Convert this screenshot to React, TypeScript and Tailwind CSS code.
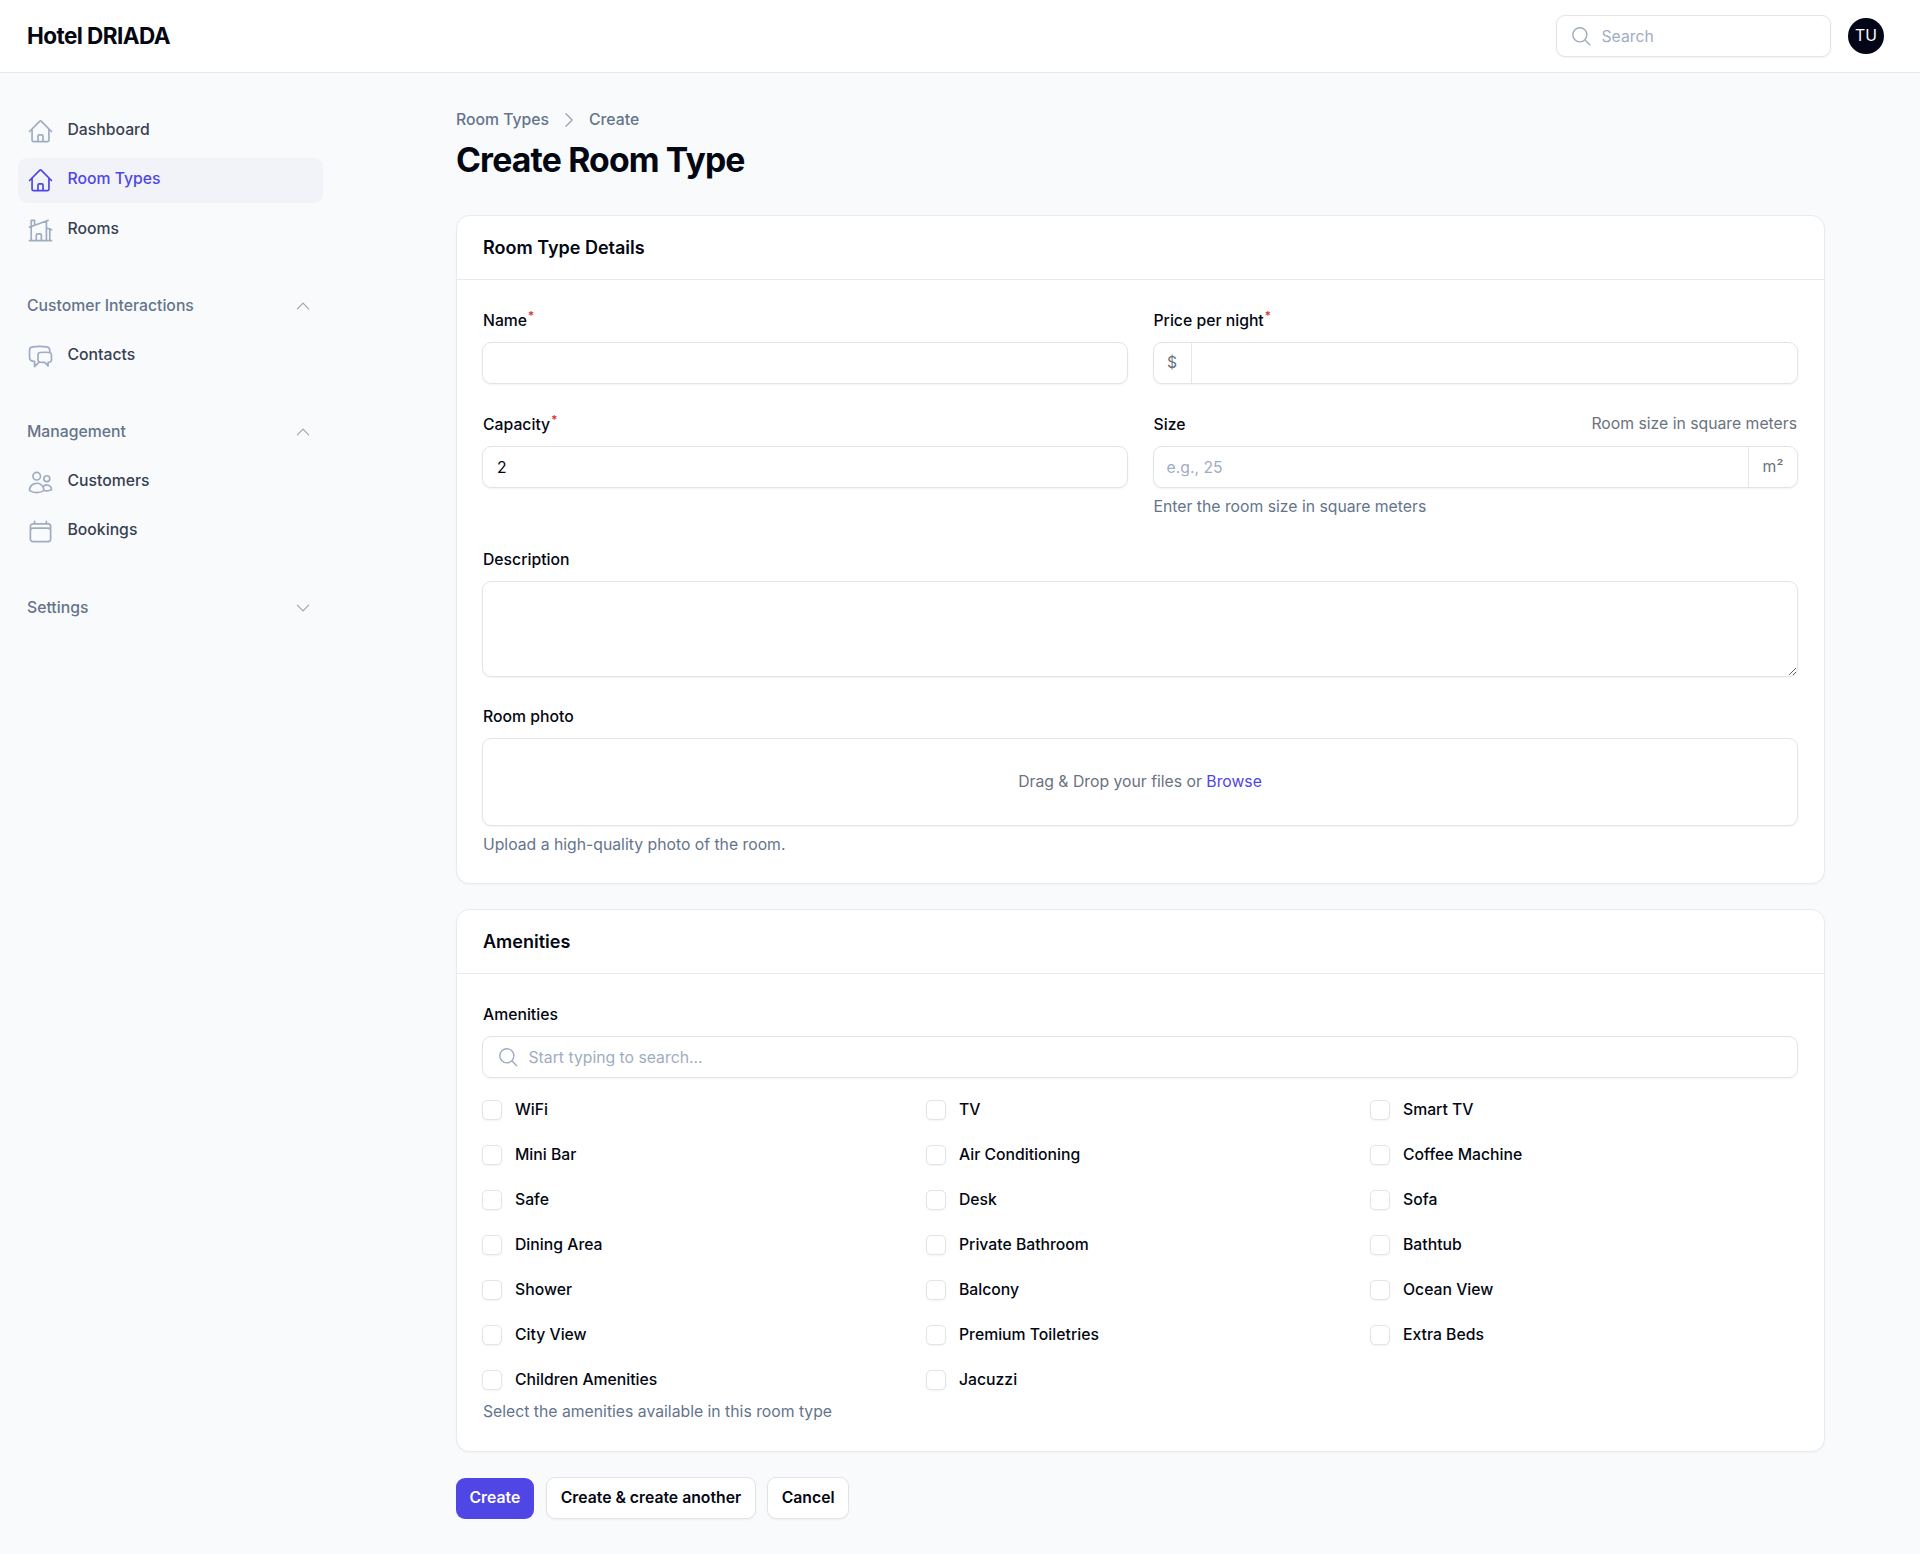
import React from 'react'
import {
  HiOutlineHome,
  HiOutlineHomeModern,
  HiOutlineChatBubbleLeftRight,
  HiOutlineUsers,
  HiOutlineCalendar,
  HiOutlineMagnifyingGlass,
  HiOutlineChevronUp,
  HiOutlineChevronDown,
  HiOutlineChevronRight
} from 'react-icons/hi2'

const amenities = [
  'WiFi', 'TV', 'Smart TV',
  'Mini Bar', 'Air Conditioning', 'Coffee Machine',
  'Safe', 'Desk', 'Sofa',
  'Dining Area', 'Private Bathroom', 'Bathtub',
  'Shower', 'Balcony', 'Ocean View',
  'City View', 'Premium Toiletries', 'Extra Beds',
  'Children Amenities', 'Jacuzzi'
]

const NavItem = ({
  icon: Icon,
  label,
  active = false
}: {
  icon: React.ComponentType<{ className?: string }>
  label: string
  active?: boolean
}): React.ReactElement => (
  <a
    className={
      active
        ? 'flex items-start gap-[13.5px] p-[9px] rounded-[9px] bg-[#f1f3f9] text-[#4f46e5]'
        : 'flex items-start gap-[13.5px] p-[9px] rounded-[9px] text-[#374151]'
    }
  >
    <Icon className={active ? 'w-[27px] h-[27px] text-[#4f46e5]' : 'w-[27px] h-[27px] text-[#9fadc2]'} />
    <span className="mt-[1px] text-[15.75px] font-medium leading-[22.5px]">{label}</span>
  </a>
)

const GroupLabel = ({ label, open = true }: { label: string; open?: boolean }): React.ReactElement => (
  <div className="flex items-center justify-between h-[22.5px] pl-[9px] pr-[11px] text-[#64748b]">
    <span className="text-[15.75px] font-medium leading-[22.5px]">{label}</span>
    {open ? (
      <HiOutlineChevronUp className="w-[18px] h-[18px] text-[#9ca3af]" />
    ) : (
      <HiOutlineChevronDown className="w-[18px] h-[18px] text-[#9ca3af]" />
    )}
  </div>
)

const Label = ({ children, required = false }: { children: React.ReactNode; required?: boolean }): React.ReactElement => (
  <label className="block h-[25px] text-[15.75px] leading-[27px] font-medium text-[#030712]">
    {children}
    {required && <sup className="text-[#dc2626] font-medium ml-[1px]">*</sup>}
  </label>
)

const boxClass = 'flex items-center h-[42px] mt-[10px] -mx-[1px] rounded-[9px] bg-white border border-[#e2e4e9] shadow-[0_1px_2px_rgba(0,0,0,0.05)] overflow-hidden'
const inputClass = 'flex-1 min-w-0 h-full px-[13px] bg-transparent outline-none text-[15.75px] text-[#030712] placeholder:text-[#9fadc2]'
const hintClass = 'text-[15.75px] leading-[22.5px] text-[#64748b]'
const outlineButton = 'h-[42px] rounded-[9px] bg-white border border-[#e2e4e9] shadow-[0_1px_2px_rgba(0,0,0,0.05)] text-[#030712] text-[15.75px] font-semibold'

const Card = ({ title, children }: { title: string; children: React.ReactNode }): React.ReactElement => (
  <section className="bg-white rounded-[13.5px] border border-[#e8eaee] shadow-[0_1px_2px_rgba(0,0,0,0.04)]">
    <h2 className="h-[64px] flex items-center px-[26px] border-b border-[#e8eaee] text-[18px] font-semibold text-[#030712]">
      {title}
    </h2>
    {children}
  </section>
)

const App: React.FC = (): React.ReactElement => {
  return (
    <div className="min-h-[1554px] bg-[#f9fafb] font-['Inter',sans-serif]">
      <header className="h-[73px] bg-white border-b border-[#e5e7eb] flex items-center justify-between pl-[27px] pr-[36px]">
        <span className="text-[22.5px] font-bold tracking-tight text-[#030712]">Hotel DRIADA</span>
        <div className="flex items-center gap-[17px]">
          <div className="w-[275px] h-[42px] flex items-center gap-[9px] px-[13px] rounded-[9px] bg-white border border-[#e2e4e9] shadow-[0_1px_2px_rgba(0,0,0,0.05)]">
            <HiOutlineMagnifyingGlass className="w-[22.5px] h-[22.5px] text-[#9fadc2]" />
            <input className="flex-1 min-w-0 mt-[2px] bg-transparent outline-none text-[15.75px] placeholder:text-[#9fadc2]" placeholder="Search" />
          </div>
          <div className="w-[36px] h-[36px] rounded-full bg-[#020617] text-white text-[15.75px] flex items-center justify-center">
            TU
          </div>
        </div>
      </header>

      <div className="flex">
        <aside className="w-[320px] shrink-0 pt-[35.5px] pl-[18px]">
          <nav className="w-[305px]">
            <div className="flex flex-col gap-[4.5px]">
              <NavItem icon={HiOutlineHome} label="Dashboard" />
              <NavItem icon={HiOutlineHome} label="Room Types" active />
              <NavItem icon={HiOutlineHomeModern} label="Rooms" />
            </div>
            <div className="mt-[42.5px]">
              <GroupLabel label="Customer Interactions" />
              <div className="mt-[16px]">
                <NavItem icon={HiOutlineChatBubbleLeftRight} label="Contacts" />
              </div>
            </div>
            <div className="mt-[42px]">
              <GroupLabel label="Management" />
              <div className="mt-[16.5px] flex flex-col gap-[4.5px]">
                <NavItem icon={HiOutlineUsers} label="Customers" />
                <NavItem icon={HiOutlineCalendar} label="Bookings" />
              </div>
            </div>
            <div className="mt-[43px]">
              <GroupLabel label="Settings" open={false} />
            </div>
          </nav>
        </aside>

        <main className="flex-1 pl-[136px] pr-[95px] pt-[35.5px]">
          <div className="flex items-center gap-[10px] h-[22.5px] text-[15.75px] font-medium text-[#64748b]">
            <span>Room Types</span>
            <HiOutlineChevronRight className="w-[20px] h-[20px] text-[#9ca3af]" />
            <span>Create</span>
          </div>
          <h1 className="mt-[9px] h-[40.5px] text-[33.75px] leading-[40.5px] font-bold tracking-tight text-[#030712]">
            Create Room Type
          </h1>

          <div className="mt-[34.5px] flex flex-col gap-[25px]">
            <Card title="Room Type Details">
              <div className="pl-[26px] pr-[27px] pt-[27px] pb-[27px]">
                <div className="grid grid-cols-2 gap-x-[27px] gap-y-[27px]">
                  <div>
                    <Label required>Name</Label>
                    <div className={boxClass}>
                      <input className={inputClass} />
                    </div>
                  </div>
                  <div>
                    <Label required>Price per night</Label>
                    <div className={boxClass}>
                      <span className="w-[38px] h-full flex items-center justify-center border-r border-[#e5e7eb] text-[15.75px] text-[#6b7280]">
                        $
                      </span>
                      <input className={inputClass} />
                    </div>
                  </div>
                  <div>
                    <Label required>Capacity</Label>
                    <div className={boxClass}>
                      <input className={inputClass + ' pl-[14px]'} defaultValue="2" />
                    </div>
                  </div>
                  <div>
                    <div className="flex justify-between h-[25px]">
                      <Label>Size</Label>
                      <span className="text-[15.75px] leading-[26px] text-[#6b7280]">Room size in square meters</span>
                    </div>
                    <div className={boxClass}>
                      <input className={inputClass} placeholder="e.g., 25" />
                      <span className="w-[49px] h-full flex items-center justify-center border-l border-[#e5e7eb] text-[15.75px] text-[#6b7280]">
                        m²
                      </span>
                    </div>
                    <p className={hintClass + ' mt-[8px]'}>Enter the room size in square meters</p>
                  </div>
                </div>

                <div className="mt-[27.5px]">
                  <Label>Description</Label>
                  <textarea className="block w-[calc(100%+2px)] h-[96px] mt-[9.5px] -mx-[1px] rounded-[9px] bg-white border border-[#e2e4e9] shadow-[0_1px_2px_rgba(0,0,0,0.05)] outline-none resize-y px-[13px] py-[9px] text-[15.75px]" />
                </div>

                <div className="mt-[26.5px]">
                  <Label>Room photo</Label>
                  <div className="h-[88px] mt-[9.5px] -mx-[1px] flex items-center justify-center rounded-[9px] bg-white border border-[#e2e4e9] shadow-[0_1px_2px_rgba(0,0,0,0.05)] text-[15.75px] text-[#6b7280]">
                    <span>
                      Drag &amp; Drop your files or <span className="text-[#4f46e5]">Browse</span>
                    </span>
                  </div>
                  <p className={hintClass + ' mt-[8px]'}>Upload a high-quality photo of the room.</p>
                </div>
              </div>
            </Card>

            <Card title="Amenities">
              <div className="pl-[26px] pr-[27px] pt-[27px] pb-[27px]">
                <Label>Amenities</Label>
                <div className={boxClass + ' pl-[14px] gap-[9px]'}>
                  <HiOutlineMagnifyingGlass className="w-[22.5px] h-[22.5px] text-[#9fadc2]" />
                  <input className="flex-1 min-w-0 mt-[2px] bg-transparent outline-none text-[15.75px] placeholder:text-[#9fadc2]" placeholder="Start typing to search..." />
                </div>
                <div className="mt-[20.5px] -ml-[1px] mr-[1px] grid grid-cols-3 gap-x-[18px] gap-y-[22.5px]">
                  {amenities.map((item) => (
                    <label key={item} className="flex items-center gap-[13px] h-[22.5px]">
                      <span className="w-[20px] h-[20px] rounded-[5px] bg-white border border-[#e2e4e9] shadow-[0_1px_2px_rgba(0,0,0,0.05)]" />
                      <span className="text-[15.75px] font-medium text-[#030712]">{item}</span>
                    </label>
                  ))}
                </div>
                <p className={hintClass + ' mt-[10px]'}>Select the amenities available in this room type</p>
              </div>
            </Card>
          </div>

          <div className="mt-[25.5px] flex items-center">
            <button type="button" className="h-[41px] px-[13.5px] rounded-[9px] bg-[#4f46e5] text-white text-[15.75px] font-semibold">
              Create
            </button>
            <button type="button" className={outlineButton + ' ml-[12px] px-[14px]'}>
              Create &amp; create another
            </button>
            <button type="button" className={outlineButton + ' ml-[11px] px-[13.5px]'}>
              Cancel
            </button>
          </div>
        </main>
      </div>
    </div>
  )
}

export default App
